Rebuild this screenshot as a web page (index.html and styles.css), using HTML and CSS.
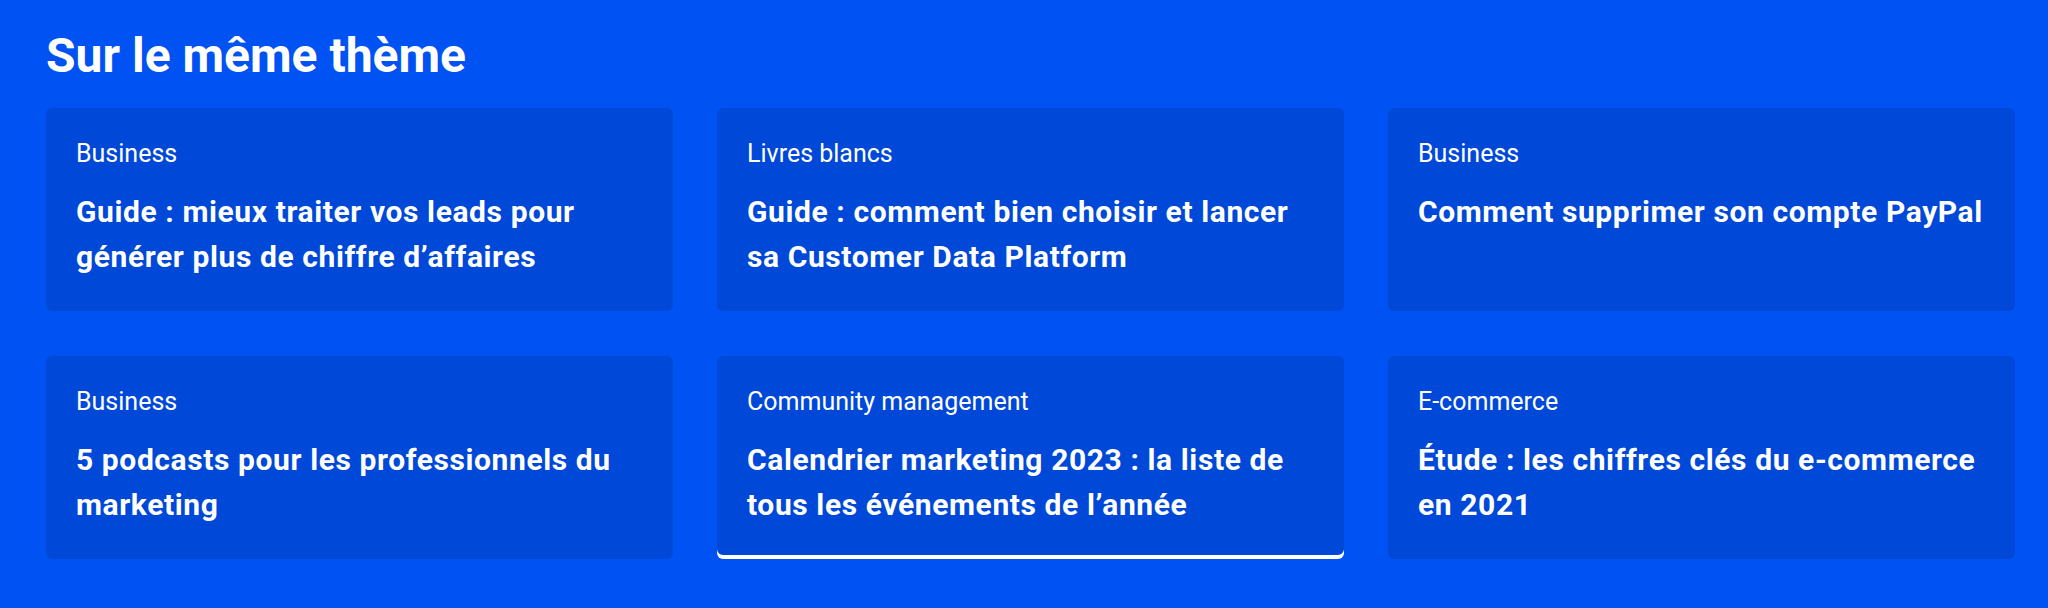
FILE: index.html
```html
<!DOCTYPE html>
<html lang="fr">
<head>
    <meta charset="UTF-8">
    <meta name="viewport" content="width=device-width, initial-scale=1.0">
    <title>Sur le même thème</title>
    <link rel="stylesheet" href="styles.css">
</head>
<body>

    <section class="related">
        <h2 class="related-title">Sur le même thème</h2>

        <div class="related-grid">
            <a class="card" href="#">
                <span class="card-category">Business</span>
                <span class="card-title">Guide : mieux traiter vos leads pour générer plus de chiffre d’affaires</span>
            </a>
            <a class="card" href="#">
                <span class="card-category">Livres blancs</span>
                <span class="card-title">Guide : comment bien choisir et lancer sa Customer Data Platform</span>
            </a>
            <a class="card" href="#">
                <span class="card-category">Business</span>
                <span class="card-title">Comment supprimer son compte PayPal</span>
            </a>
            <a class="card" href="#">
                <span class="card-category">Business</span>
                <span class="card-title">5 podcasts pour les professionnels du marketing</span>
            </a>
            <a class="card card-active" href="#">
                <span class="card-category">Community management</span>
                <span class="card-title">Calendrier marketing 2023 : la liste de tous les événements de l’année</span>
            </a>
            <a class="card" href="#">
                <span class="card-category">E-commerce</span>
                <span class="card-title">Étude : les chiffres clés du e-commerce en 2021</span>
            </a>
        </div>
    </section>

</body>
</html>
```

FILE: styles.css
```css
body{
    margin: 0;
    background: #0052f2;
    font-family: Roboto, "Noto Sans", sans-serif;
    color: white;
}
.related
{
    padding: 25px 33px 49px 46px;
}
.related-title
{
    margin: 0 0 21px 0;
    font-size: 48px;
    font-weight: 700;
    line-height: 62px;
}
.related-grid
{
    display: grid;
    grid-template-columns: repeat(3, 1fr);
    column-gap: 44px;
    row-gap: 45px;
}
.card
{
    display: flex;
    flex-direction: column;
    gap: 19px;
    height: 203px;
    box-sizing: border-box;
    padding: 30px 30px;
    background: #0048d8;
    border-radius: 6px;
    color: white;
    text-decoration: none;
}
.card-active
{
    box-shadow: inset 0 -4px 0 white;
}
.card-category
{
    font-size: 25px;
    line-height: 32px;
}
.card-title
{
    font-size: 30px;
    font-weight: 700;
    line-height: 45px;
    letter-spacing: 0.6px;
}
```
